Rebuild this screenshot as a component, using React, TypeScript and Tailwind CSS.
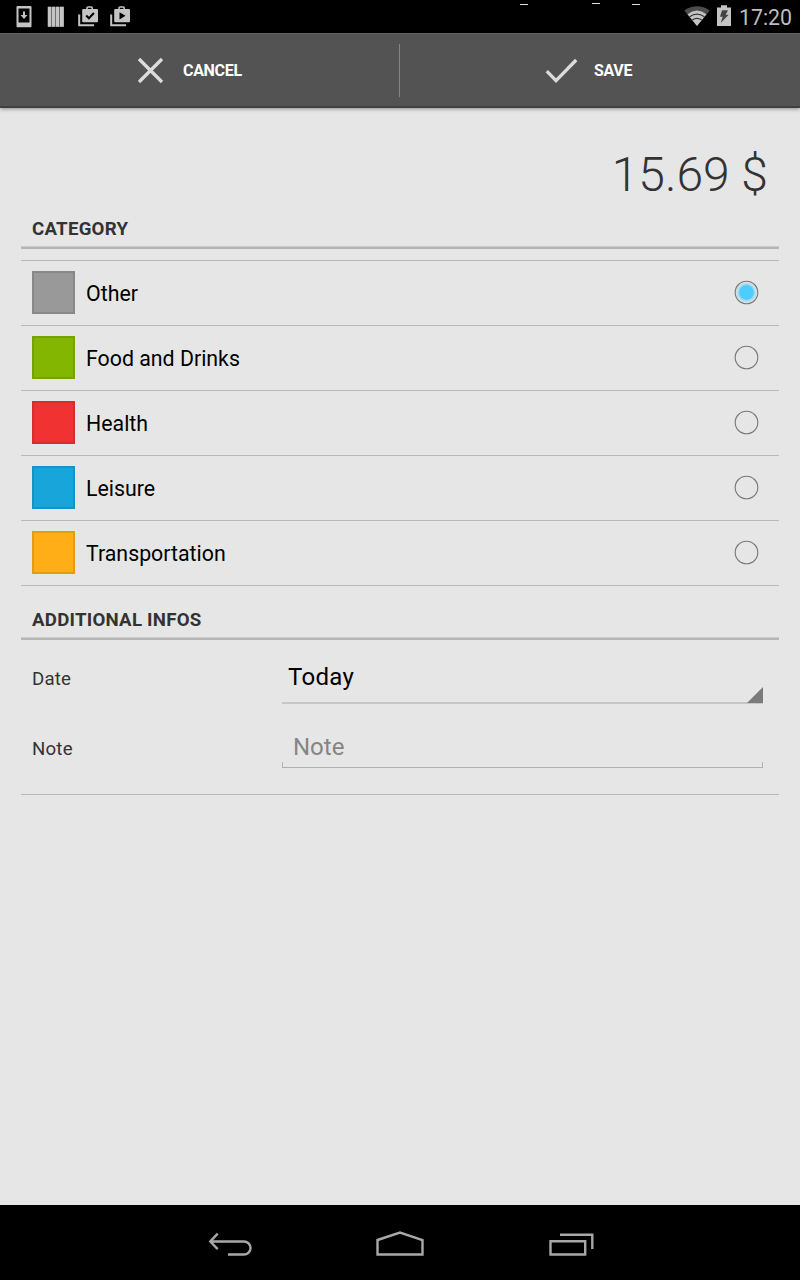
import type { ReactNode } from "react";

type Category = { name: string; swatch: string };

const categories: Category[] = [
  { name: "Other", swatch: "bg-[#999999] border-[#888888]" },
  { name: "Food and Drinks", swatch: "bg-[#83b600] border-[#75a300]" },
  { name: "Health", swatch: "bg-[#f03232] border-[#d72d2d]" },
  { name: "Leisure", swatch: "bg-[#17a5da] border-[#1494c3]" },
  { name: "Transportation", swatch: "bg-[#ffae18] border-[#e59c15]" },
];

function Bag({ children }: { children: ReactNode }) {
  return (
    <svg width="22" height="22" viewBox="0 0 22 22" fill="none">
      <path d="M1.2 9.500v10.700H16" stroke="#c4c4c4" strokeWidth="2" />
      <path d="M9 4.500V3.100Q9 2 10.100 2h3Q14.200 2 14.200 3.100V4.500" stroke="#c4c4c4" strokeWidth="1.600" />
      <rect x="4.200" y="3.900" width="15.800" height="13.400" rx="1" fill="#c4c4c4" />
      {children}
    </svg>
  );
}

function StatusBar() {
  return (
    <div className="relative flex h-[33px] shrink-0 items-start bg-black pl-4">
      <svg className="mt-[6px]" width="16" height="22" viewBox="0 0 16 22">
        <rect x="0.500" width="15" height="21.300" rx="1" fill="#c4c4c4" />
        <rect x="2.500" y="2.500" width="11" height="14" fill="#000" />
        <path d="M8 5.500v5" stroke="#c4c4c4" strokeWidth="2" fill="none" />
        <path d="M4.600 9h6.800L8 13z" fill="#c4c4c4" />
      </svg>
      <svg className="mt-[6px] ml-[15px]" width="17" height="22" viewBox="0 0 17 22">
        <rect x="0.800" y="0.800" width="16" height="20" fill="#5c5c5c" />
        <path d="M.8.8h3.300v20H.8zM4.900.8h3.200v20H4.900zM8.900.8h3.200v20H8.900zM12.900.8h3.900v20h-3.900z" fill="#c4c4c4" />
      </svg>
      <div className="mt-[5px] ml-[14px] flex gap-[10px]">
        <Bag>
          <path d="m8.200 10.500 2.700 2.700 5-5.200" stroke="#000" strokeWidth="2" />
        </Bag>
        <Bag>
          <path d="m9.500 7.200 6 3.600-6 3.600z" fill="#000" />
        </Bag>
      </div>
      <div className="absolute top-[4px] left-[520px] h-px w-2 bg-[#d8e8e0]" />
      <div className="absolute top-[3px] left-[592px] h-px w-2 bg-[#e8e0d8]" />
      <div className="absolute top-[4px] left-[632px] h-px w-2 bg-[#e0d8e8]" />
      <div className="ml-auto flex items-start pr-[8px]">
        <svg className="mt-[6px]" width="26" height="20" viewBox="0 0 26 20">
          <path d="M.3 4.400Q13-4 25.700 4.400L13 20z" fill="#4c4c4c" />
          <path d="M3.500 8.200Q13 1 22.500 8.200L13 20z" fill="#c4c4c4" />
          <path d="M5.600 10.700Q13 5.500 20.400 10.700M8.300 14Q13 10.800 17.700 14" stroke="#333" strokeWidth="1.200" fill="none" />
        </svg>
        <svg className="mt-[5px] ml-[7px]" width="14" height="21" viewBox="0 0 14 21">
          <path d="M0 2.500h4V.3h6v2.200h4V21H0z" fill="#c4c4c4" />
          <path d="M5 5.300h6L8.700 9.700h3L3.700 18l2-6.300H3z" fill="#444" />
        </svg>
        <span className="mt-[5px] ml-[8px] text-[21.300px] leading-[25px] text-[#bebebe]">17:20</span>
      </div>
    </div>
  );
}

function ActionBar() {
  return (
    <div className="flex h-[75px] shrink-0 border-t border-b-2 border-t-[#636363] border-b-[#404040] bg-[#535353] font-bold text-white shadow-[0_1px_4px_rgba(0,0,0,0.4)]">
      <button className="flex w-[399px] items-center pl-[137px] text-[16px]">
        <svg width="27" height="27" viewBox="0 0 27 27">
          <path d="m2 2 23 23M25 2 2 25" stroke="#dcdcdc" strokeWidth="3.300" />
        </svg>
        <span className="mt-[2px] ml-[19px] tracking-[-0.300px]">CANCEL</span>
      </button>
      <div className="mt-[10px] h-[53px] w-px bg-[#858585]" />
      <button className="flex flex-1 items-center pl-[145px] text-[16px]">
        <svg width="33" height="27" viewBox="0 0 33 27">
          <path d="m1.800 14.200 9.200 9.500L31.200 3" stroke="#dcdcdc" strokeWidth="3.300" fill="none" />
        </svg>
        <span className="mt-[2px] ml-[16px] tracking-[-0.300px]">SAVE</span>
      </button>
    </div>
  );
}

function SectionTitle({ children }: { children: ReactNode }) {
  return (
    <h2 className="border-b-2 border-[#b5b5b5] pl-[11px] text-[18.670px] leading-[22px] font-bold tracking-[0.240px] text-[#333] shadow-[inset_0_-1px_0_#cbcbcb]">
      <span className="block pb-[7px]">{children}</span>
    </h2>
  );
}

function NavBar() {
  return (
    <div className="flex h-[75px] shrink-0 bg-black pl-[207px]">
      <svg className="mt-[26px]" width="46" height="26" viewBox="0 0 46 26" fill="none" stroke="#a8a8a8" strokeWidth="2.400">
        <path d="M3 10.500h34a6.500 6.500 0 0 1 0 13H21M10.700 2.600 3.300 10.500l7.400 7.600" />
      </svg>
      <svg className="mt-[24px] ml-[122px]" width="50" height="28" viewBox="0 0 50 28" fill="none" stroke="#a8a8a8" strokeWidth="2.400">
        <path d="M2.500 11 25 3.500 47.500 11v14.500h-45z" />
      </svg>
      <svg className="mt-[27px] ml-[123px]" width="48" height="26" viewBox="0 0 48 26" fill="none" stroke="#a8a8a8" strokeWidth="2.400">
        <path d="M2.500 9.200h34.700v13.300H2.500zM12 2.700h32.300V17" />
      </svg>
    </div>
  );
}

export default function App() {
  return (
    <div className="flex h-[1280px] w-[800px] flex-col bg-[#e6e6e6] font-['Roboto',sans-serif]">
      <StatusBar />
      <ActionBar />
      <main className="flex-1 px-[21px] pt-[39px]">
        <div className="pr-[11px] text-right text-[48px] leading-[56px] font-light text-[#333]">15.69 $</div>
        <div className="mt-[15px]">
          <SectionTitle>CATEGORY</SectionTitle>
        </div>
        <ul className="mt-[11px] border-t border-[#b9b9b9]">
          {categories.map((category, index) => (
            <li key={category.name} className="flex h-[65px] items-center border-b border-[#b9b9b9] pr-[20px] pl-[11px]">
              <div className={`mb-px size-[43px] border-2 ${category.swatch}`} />
              <span className="mt-px ml-[11px] text-[21.330px] leading-[25px] text-black">{category.name}</span>
              <svg className="mb-px ml-auto" width="25" height="25" viewBox="0 0 25 25">
                {index === 0 && (
                  <>
                    <circle cx="12.500" cy="12.500" r="10.500" fill="#c3dfea" />
                    <circle cx="12.500" cy="12.500" r="8.400" fill="#8fd6f1" />
                    <circle cx="12.500" cy="12.500" r="7.200" fill="#4dccff" />
                  </>
                )}
                <circle cx="12.500" cy="12.500" r="11.300" fill="none" stroke="#777" strokeWidth="1.100" />
              </svg>
            </li>
          ))}
        </ul>
        <div className="mt-[23px]">
          <SectionTitle>ADDITIONAL INFOS</SectionTitle>
        </div>
        <div className="border-b border-[#b9b9b9] pr-[16px] pb-[26px] pl-[11px]">
          <div className="flex h-[64px]">
            <span className="mt-[28px] w-[250px] text-[18.670px] leading-[22px] tracking-[0.200px] text-[#333]">Date</span>
            <div className="relative flex-1 border-b-2 border-[#c6c6c6]">
              <span className="block pt-[23px] pl-[6px] text-[24px] leading-[28px] tracking-[0.300px] text-black">Today</span>
              <svg className="absolute right-0 -bottom-px" width="16" height="16" viewBox="0 0 16 16">
                <path d="M16 0v16H0z" fill="#7b7b7b" />
              </svg>
            </div>
          </div>
          <div className="flex h-[64px]">
            <span className="mt-[34px] w-[250px] text-[18.670px] leading-[22px] tracking-[0.200px] text-[#333]">Note</span>
            <div className="relative flex-1 border-b border-[#b0b0b0]">
              <span className="block pt-[29px] pl-[11px] text-[24px] leading-[28px] text-[#858585]">Note</span>
              <div className="absolute bottom-0 left-0 h-[5px] w-full border-x border-[#b5b5b5]" />
            </div>
          </div>
        </div>
      </main>
      <NavBar />
    </div>
  );
}
